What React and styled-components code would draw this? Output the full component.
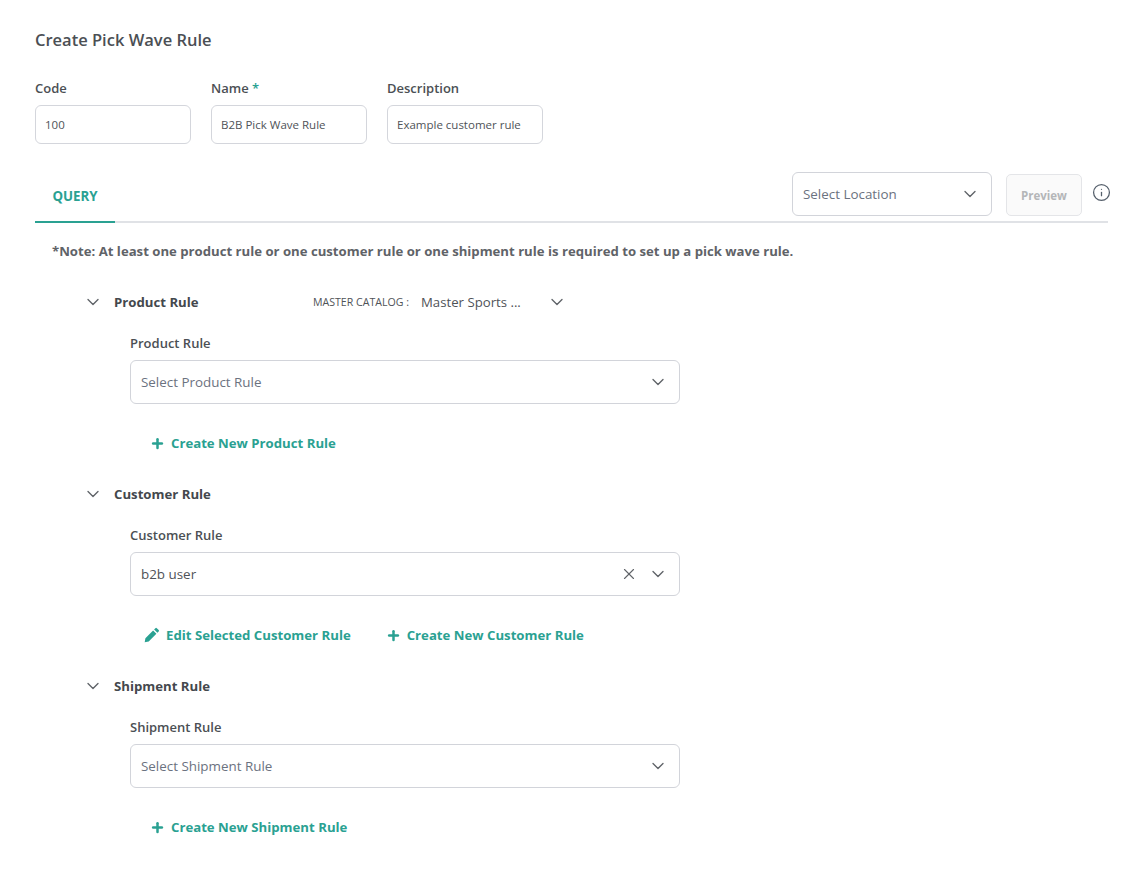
import styled, { createGlobalStyle } from 'styled-components'
import { ChevronDown, X, Plus, Info } from 'lucide-react'

const GlobalStyle = createGlobalStyle`
  html, body { margin: 0; padding: 0; background: #fff; }
  body { font-family: "Open Sans", "Noto Sans", sans-serif; color: #4a4f55; }
`

const Page = styled.div`
  width: 1138px;
  height: 875px;
  box-sizing: border-box;
  padding: 29px 30px 0 35px;
  overflow: hidden;
`

const Title = styled.h1`
  margin: 0;
  font-size: 16.5px;
  line-height: 22px;
  font-weight: 600;
  color: #4b4f54;
`

const TopFields = styled.div`
  display: flex;
  gap: 20px;
  margin-top: 28px;
`

const Field = styled.div`
  display: flex;
  flex-direction: column;
  width: 156px;
`

const Label = styled.label`
  font-size: 13px;
  line-height: 18px;
  font-weight: 600;
  color: #4b4f54;
`

const Required = styled.span`
  color: #2aa192;
`

const TextBox = styled.div`
  box-sizing: border-box;
  height: 39px;
  margin-top: 8px;
  padding: 0 9px;
  display: flex;
  align-items: center;
  border: 1px solid #d4d6dc;
  border-radius: 6px;
  font-size: 11.5px;
  color: #4f5358;
  white-space: nowrap;
`

const TabBar = styled.div`
  display: flex;
  align-items: flex-start;
  justify-content: space-between;
  height: 49px;
  margin-top: 28px;
  border-bottom: 2px solid #e0e2e6;
`

const Tab = styled.div`
  box-sizing: border-box;
  width: 80px;
  height: 51px;
  padding-bottom: 2px;
  display: flex;
  align-items: center;
  justify-content: center;
  border-bottom: 2px solid #2aa192;
  font-size: 13.3px;
  font-weight: 700;
  color: #2aa192;
`

const TabTools = styled.div`
  display: flex;
  align-items: flex-start;
  margin-right: -3px;
`

const Select = styled.div`
  box-sizing: border-box;
  width: ${(p) => p.$width || '550px'};
  height: 44px;
  padding: 0 11px 0 10px;
  display: flex;
  align-items: center;
  justify-content: space-between;
  border: 1px solid #d2d4da;
  border-radius: 6px;
  font-size: 13.4px;
  color: ${(p) => (p.$filled ? '#4f5358' : '#6b7280')};
`

const SelectIcons = styled.span`
  display: flex;
  align-items: center;
  gap: 10px;
  color: #5f6368;
`

const PreviewButton = styled.button`
  box-sizing: border-box;
  width: 76px;
  height: 42px;
  margin: 2px 0 0 14px;
  border: 1px solid #e4e5e8;
  border-radius: 5px;
  background: #fafafa;
  font-family: inherit;
  font-size: 11.5px;
  font-weight: 700;
  color: #b4b6b8;
`

const InfoButton = styled.span`
  display: flex;
  margin: 11px 0 0 10px;
  color: #56606c;
`

const Note = styled.p`
  margin: 19px 0 0 17px;
  font-size: 13.17px;
  line-height: 18px;
  font-weight: 700;
  color: #5f6368;
`

const Sections = styled.div`
  margin-top: 31px;
`

const Section = styled.section`
  margin: 0 0 0 48px;
  height: 192px;
`

const SectionHeader = styled.div`
  display: flex;
  align-items: center;
  height: 22px;
  color: #5f6368;
`

const SectionTitle = styled.h2`
  margin: 0 0 0 11px;
  width: 199px;
  font-size: 13.2px;
  font-weight: 700;
  color: #44484d;
`

const CatalogLabel = styled.span`
  font-size: 10.6px;
  color: #4f5358;
  width: 108px;
`

const CatalogValue = styled.span`
  font-size: 13.2px;
  color: #4f5358;
  width: 126px;
`

const SectionBody = styled.div`
  margin-left: 47px;
  padding-top: 21px;
`

const BodyLabel = styled(Label)`
  display: block;
  margin-bottom: 8px;
`

const Actions = styled.div`
  display: flex;
  gap: 35px;
  margin: 29px 0 0 ${(p) => p.$indent || '20px'};
`

const ActionLink = styled.a`
  display: flex;
  align-items: center;
  gap: 6px;
  height: 20px;
  font-size: 13.2px;
  font-weight: 700;
  color: #2aa192;
`

const Pencil = () => (
  <svg width="16" height="16" viewBox="0 0 16 16" fill="#2aa192">
    <path d="M11.4 1.2a1 1 0 0 1 1.4 0l1.9 1.9a1 1 0 0 1 0 1.4l-1.3 1.3-3.3-3.3zM9.1 3.5l3.3 3.3-7.7 7.7-4 .7.7-4z" />
  </svg>
)

const Chevron = () => <ChevronDown size={20} strokeWidth={1.6} />
const AddIcon = () => <Plus size={15} strokeWidth={4} />

function RuleSection({ name, catalog, value, placeholder, actions, indent }) {
  return (
    <Section>
      <SectionHeader>
        <Chevron />
        <SectionTitle>{name}</SectionTitle>
        {catalog && (
          <>
            <CatalogLabel>MASTER CATALOG :</CatalogLabel>
            <CatalogValue>{catalog}</CatalogValue>
            <Chevron />
          </>
        )}
      </SectionHeader>
      <SectionBody>
        <BodyLabel>{name}</BodyLabel>
        <Select $filled={!!value}>
          {value || placeholder}
          <SelectIcons>
            {value && <X size={18} strokeWidth={1.5} />}
            <Chevron />
          </SelectIcons>
        </Select>
        <Actions $indent={indent}>{actions}</Actions>
      </SectionBody>
    </Section>
  )
}

export default function App() {
  return (
    <Page>
      <GlobalStyle />
      <Title>Create Pick Wave Rule</Title>
      <TopFields>
        <Field>
          <Label>Code</Label>
          <TextBox>100</TextBox>
        </Field>
        <Field>
          <Label>
            Name <Required>*</Required>
          </Label>
          <TextBox>B2B Pick Wave Rule</TextBox>
        </Field>
        <Field>
          <Label>Description</Label>
          <TextBox>Example customer rule</TextBox>
        </Field>
      </TopFields>
      <TabBar>
        <Tab>QUERY</Tab>
        <TabTools>
          <Select $width="200px">
            Select Location
            <SelectIcons>
              <Chevron />
            </SelectIcons>
          </Select>
          <PreviewButton disabled>Preview</PreviewButton>
          <InfoButton>
            <Info size={19} strokeWidth={1.6} />
          </InfoButton>
        </TabTools>
      </TabBar>
      <Note>*Note: At least one product rule or one customer rule or one shipment rule is required to set up a pick wave rule.</Note>
      <Sections>
        <RuleSection
          name="Product Rule"
          catalog="Master Sports ..."
          placeholder="Select Product Rule"
          actions={
            <ActionLink>
              <AddIcon />
              Create New Product Rule
            </ActionLink>
          }
        />
        <RuleSection
          name="Customer Rule"
          value="b2b user"
          indent="14px"
          actions={
            <>
              <ActionLink>
                <Pencil />
                Edit Selected Customer Rule
              </ActionLink>
              <ActionLink>
                <AddIcon />
                Create New Customer Rule
              </ActionLink>
            </>
          }
        />
        <RuleSection
          name="Shipment Rule"
          placeholder="Select Shipment Rule"
          actions={
            <ActionLink>
              <AddIcon />
              Create New Shipment Rule
            </ActionLink>
          }
        />
      </Sections>
    </Page>
  )
}
